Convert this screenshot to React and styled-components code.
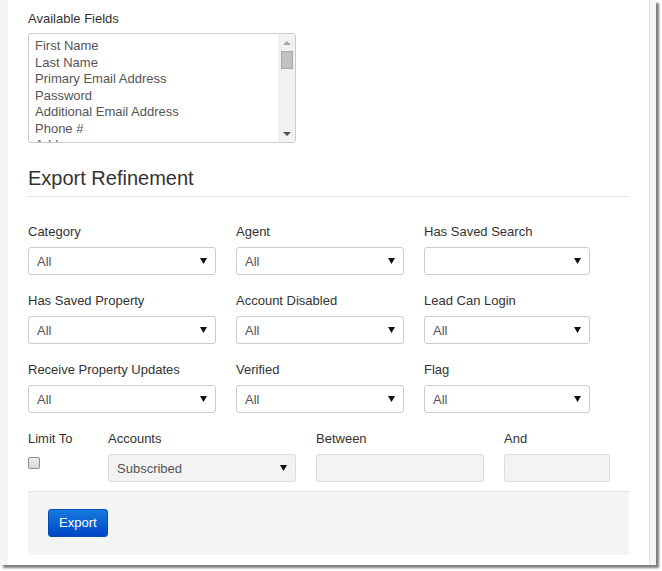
import React from "react";
import styled, { createGlobalStyle } from "styled-components";

const GlobalStyle = createGlobalStyle`
  html, body {
    margin: 0;
    background: #fff;
  }
  body {
    font-family: "Liberation Sans", Arial, sans-serif;
    font-size: 13px;
    color: #333;
  }
`;

const Page = styled("div")`
  width: 662px;
  height: 571px;
  box-sizing: border-box;
  padding: 0 6px 6px 0;
  background: #fff;
`;

const Frame = styled("div")`
  display: flex;
  width: 656px;
  height: 565px;
  box-shadow: 3px 3px 2px rgba(0, 0, 0, 0.5);
`;

const Rail = styled("div")`
  width: ${(p) => p.$width}px;
  flex-shrink: 0;
  box-sizing: border-box;
  background: #f4f5f7;
  border-left: ${(p) => (p.$edge ? "1px solid #e2e3e6" : "none")};
`;

const Panel = styled("main")`
  flex: 1;
  background: #fff;
  padding: 10px 20px 10px;
`;

const Label = styled("div")`
  line-height: 18px;
  height: 18px;
  margin-bottom: 6px;
  color: #333;
  white-space: nowrap;
`;

const ListBox = styled("div")`
  display: flex;
  width: 268px;
  height: 110px;
  box-sizing: border-box;
  margin-top: -1px;
  border: 1px solid #ccc;
  border-radius: 3px;
  overflow: hidden;
`;

const Options = styled("ul")`
  flex: 1;
  margin: 0;
  padding: 4px 6px 0;
  list-style: none;
  line-height: 16.5px;
  color: #555;
  white-space: nowrap;
  overflow: hidden;
`;

const ScrollTrack = styled("div")`
  display: flex;
  flex-direction: column;
  align-items: center;
  width: 17px;
  background: #f1f1f1;
`;

const ScrollButton = styled("div")`
  display: flex;
  align-items: center;
  justify-content: center;
  height: 17px;
  width: 100%;
`;

const Thumb = styled("div")`
  width: 12px;
  height: 18px;
  box-sizing: border-box;
  background: #c1c1c1;
  border: 1px solid #a9a9a9;
`;

const Spacer = styled("div")`
  flex: 1;
`;

const Heading = styled("h3")`
  margin: 24px 0 26px;
  padding-bottom: 7px;
  border-bottom: 1px solid #e8e8e8;
  font-size: 20px;
  line-height: 22px;
  font-weight: 400;
  color: #333;
`;

const FilterGrid = styled("div")`
  display: grid;
  grid-template-columns: ${(p) => p.$columns};
  column-gap: 20px;
  row-gap: 17px;
  margin-bottom: 17px;
`;

const LimitRow = styled(FilterGrid)`
  margin-bottom: 9px;
`;

const Field = styled("div")`
  display: flex;
  flex-direction: column;
`;

const SelectBox = styled("div")`
  display: flex;
  align-items: center;
  justify-content: space-between;
  height: 28px;
  box-sizing: border-box;
  padding: 0 8px;
  border: 1px solid ${(p) => (p.$disabled ? "#dcdcdc" : "#ccc")};
  border-radius: 3px;
  background: ${(p) => (p.$disabled ? "#f3f3f3" : "#fff")};
  color: #555;
`;

const TextBox = styled("div")`
  height: 28px;
  box-sizing: border-box;
  border: 1px solid #dcdcdc;
  border-radius: 3px;
  background: #f3f3f3;
`;

const CheckBox = styled("div")`
  width: 12px;
  height: 12px;
  margin-top: 3px;
  box-sizing: border-box;
  border: 1px solid #8f8f8f;
  border-radius: 2px;
  background: linear-gradient(#ececec, #d8d8d8);
`;

const Footer = styled("div")`
  padding: 17px 20px 18px;
  border-top: 1px solid #e3e3e3;
  background: #f4f4f4;
`;

const Button = styled("button")`
  height: 28px;
  padding: 0 10px;
  border: 1px solid #0a48b8;
  border-radius: 3px;
  background: linear-gradient(#157ade, #0046c6);
  color: #fff;
  font-family: inherit;
  font-size: 13px;
  line-height: 26px;
`;

const Caret = () => (
  <svg width="7" height="6" viewBox="0 0 7 6">
    <polygon points="0,0 7,0 3.5,6" fill="#111" />
  </svg>
);

const Select = ({ value, disabled }) => (
  <SelectBox $disabled={disabled}>
    <span>{value}</span>
    <Caret />
  </SelectBox>
);

const fields = [
  "First Name",
  "Last Name",
  "Primary Email Address",
  "Password",
  "Additional Email Address",
  "Phone #",
  "Address",
];

const filters = [
  { label: "Category", value: "All" },
  { label: "Agent", value: "All" },
  { label: "Has Saved Search", value: "" },
  { label: "Has Saved Property", value: "All" },
  { label: "Account Disabled", value: "All" },
  { label: "Lead Can Login", value: "All" },
  { label: "Receive Property Updates", value: "All" },
  { label: "Verified", value: "All" },
  { label: "Flag", value: "All" },
];

export default function App() {
  return (
    <>
      <GlobalStyle />
      <Page>
        <Frame>
          <Rail $width={8} />
          <Panel>
            <Label>Available Fields</Label>
            <ListBox>
              <Options>
                {fields.map((f) => (
                  <li key={f}>{f}</li>
                ))}
              </Options>
              <ScrollTrack>
                <ScrollButton>
                  <svg width="8" height="4" viewBox="0 0 8 4">
                    <polygon points="0,4 8,4 4,0" fill="#a3a3a3" />
                  </svg>
                </ScrollButton>
                <Thumb />
                <Spacer />
                <ScrollButton>
                  <svg width="8" height="4" viewBox="0 0 8 4">
                    <polygon points="0,0 8,0 4,4" fill="#505050" />
                  </svg>
                </ScrollButton>
              </ScrollTrack>
            </ListBox>

            <Heading>Export Refinement</Heading>

            <FilterGrid $columns="188px 168px 166px">
              {filters.map(({ label, value }) => (
                <Field key={label}>
                  <Label>{label}</Label>
                  <Select value={value} />
                </Field>
              ))}
            </FilterGrid>

            <LimitRow $columns="60px 188px 168px 106px">
              <Field>
                <Label>Limit To</Label>
                <CheckBox />
              </Field>
              <Field>
                <Label>Accounts</Label>
                <Select value="Subscribed" disabled />
              </Field>
              <Field>
                <Label>Between</Label>
                <TextBox />
              </Field>
              <Field>
                <Label>And</Label>
                <TextBox />
              </Field>
            </LimitRow>

            <Footer>
              <Button>Export</Button>
            </Footer>
          </Panel>
          <Rail $width={7} $edge />
        </Frame>
      </Page>
    </>
  );
}
